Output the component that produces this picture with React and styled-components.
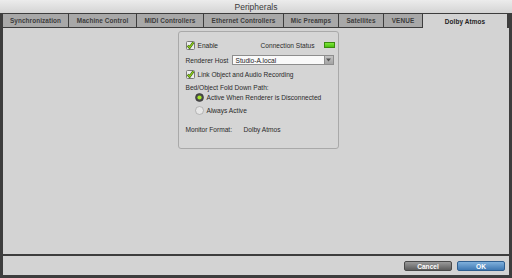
import styled, { createGlobalStyle } from "styled-components";

const GlobalStyle = createGlobalStyle`
  html, body {
    margin: 0;
    padding: 0;
    background: #3d3d3d;
  }
  * { box-sizing: border-box; }
`;

const Window = styled.div`
  width: 512px;
  height: 278px;
  background: #3d3d3d;
  display: flex;
  flex-direction: column;
  font-family: "Liberation Sans", Arial, sans-serif;
  color: #2a2a2a;
  overflow: hidden;
`;

const TitleBar = styled.div`
  height: 13px;
  background: linear-gradient(#ececec, #d4d4d4);
  display: flex;
  align-items: center;
  justify-content: center;
  font-size: 8.5px;
  color: #3a3a3a;
`;

const TabStrip = styled.div`
  display: flex;
  gap: 1px;
  margin: 1px 5px 0 3px;
  height: 14px;
`;

const Tab = styled.div`
  width: ${(p) => p.$w}px;
  flex: none;
  display: flex;
  align-items: center;
  justify-content: center;
  font-size: 6.4px;
  font-weight: bold;
  letter-spacing: 0.1px;
  color: ${(p) => (p.$active ? "#222" : "#3c3c3c")};
  background: ${(p) => (p.$active ? "#d3d3d3" : "#a8a8a8")};
  height: ${(p) => (p.$active ? "14px" : "13px")};
`;

const Content = styled.div`
  height: 226px;
  margin: 0 3px;
  background: #d3d3d3;
  display: flex;
  justify-content: center;
  padding-top: 3px;
`;

const Panel = styled.div`
  width: 161px;
  height: 118px;
  margin-left: 4px;
  border: 1px solid #a9a9a9;
  border-radius: 3px;
  background: #d5d5d5;
  padding: 8px 3px 0 7px;
  display: flex;
  flex-direction: column;
  font-size: 6.6px;
`;

const Row = styled.div`
  height: 10px;
  margin-top: ${(p) => p.$mt || 0}px;
  padding-left: ${(p) => p.$indent || 0}px;
  display: flex;
  align-items: center;
  gap: 3px;
  white-space: nowrap;
`;

const Spacer = styled.div`
  flex: 1;
`;

const Led = styled.div`
  width: 11px;
  height: 6px;
  background: linear-gradient(#7ee83a, #4cc012);
  border: 1px solid #3b8a10;
  margin-left: 6px;
`;

const Label = styled.span`
  width: ${(p) => (p.$w ? `${p.$w}px` : "auto")};
  flex: none;
`;

const Input = styled.div`
  width: 93px;
  height: 10px;
  background: #fafafa;
  border: 1px solid #8e8e8e;
  padding-left: 3px;
  display: flex;
  align-items: center;
  font-size: 6.6px;
  color: #222;
`;

const DropButton = styled.div`
  width: 9px;
  height: 10px;
  margin-left: -3px;
  background: linear-gradient(#c4c4c4, #a4a4a4);
  border: 1px solid #8e8e8e;
  border-left: none;
  display: flex;
  align-items: center;
  justify-content: center;
`;

const Footer = styled.div`
  height: 19px;
  margin: 2px 3px 0 3px;
  background: #d3d3d3;
  display: flex;
  justify-content: flex-end;
  align-items: center;
  gap: 5px;
  padding: 1px 4px 0 0;
`;

const Button = styled.div`
  width: 48px;
  height: 10px;
  border-radius: 2px;
  display: flex;
  align-items: center;
  justify-content: center;
  font-size: 6.6px;
  font-weight: bold;
  color: #fff;
  background: ${(p) =>
    p.$primary
      ? "linear-gradient(#7fb0dc, #3f78b2)"
      : "linear-gradient(#9a9a9a, #5c5c5c)"};
  border: 1px solid ${(p) => (p.$primary ? "#2f5f90" : "#4a4a4a")};
`;

const Checkbox = () => (
  <svg width="9" height="9" viewBox="0 0 9 9">
    <rect x="0.5" y="0.5" width="8" height="8" rx="1" fill="#ececec" stroke="#7a7a7a" />
    <path d="M1.8 4.6 L3.6 6.6 L7.4 1.4" fill="none" stroke="#2e4a0a" strokeWidth="2.4" />
    <path d="M1.8 4.6 L3.6 6.6 L7.4 1.4" fill="none" stroke="#8ed21c" strokeWidth="1.3" />
  </svg>
);

const Radio = ({ on }) => (
  <svg width="9" height="9" viewBox="0 0 9 9">
    {on ? (
      <>
        <circle cx="4.5" cy="4.5" r="4" fill="#4a4a4a" stroke="#333" strokeWidth="0.6" />
        <circle cx="4.5" cy="4.5" r="2.1" fill="#a6e62a" />
      </>
    ) : (
      <circle cx="4.5" cy="4.5" r="4" fill="#e6e6e6" stroke="#a0a0a0" strokeWidth="0.7" />
    )}
  </svg>
);

const tabs = [
  ["Synchronization", 65],
  ["Machine Control", 67],
  ["MIDI Controllers", 66],
  ["Ethernet Controllers", 79],
  ["Mic Preamps", 54],
  ["Satellites", 44],
  ["VENUE", 38],
  ["Dolby Atmos", 84],
];

export default function App() {
  return (
    <>
      <GlobalStyle />
      <Window>
        <TitleBar>Peripherals</TitleBar>
        <TabStrip>
          {tabs.map(([name, w], i) => (
            <Tab key={name} $w={w} $active={i === tabs.length - 1}>
              {name}
            </Tab>
          ))}
        </TabStrip>
        <Content>
          <Panel>
            <Row>
              <Checkbox />
              <span>Enable</span>
              <Spacer />
              <span>Connection Status</span>
              <Led />
            </Row>
            <Row $mt={5}>
              <Label $w={43}>Renderer Host</Label>
              <Input>Studio-A.local</Input>
              <DropButton>
                <svg width="5" height="4" viewBox="0 0 5 4">
                  <path d="M0 0.5 H5 L2.5 3.5 Z" fill="#555" />
                </svg>
              </DropButton>
            </Row>
            <Row $mt={4}>
              <Checkbox />
              <span>Link Object and Audio Recording</span>
            </Row>
            <Row $mt={3}>Bed/Object Fold Down Path:</Row>
            <Row $indent={9}>
              <Radio on />
              <span>Active When Renderer is Disconnected</span>
            </Row>
            <Row $mt={3} $indent={9}>
              <Radio />
              <span>Always Active</span>
            </Row>
            <Row $mt={9}>
              <Label $w={55}>Monitor Format:</Label>
              <span>Dolby Atmos</span>
            </Row>
          </Panel>
        </Content>
        <Footer>
          <Button>Cancel</Button>
          <Button $primary>OK</Button>
        </Footer>
      </Window>
    </>
  );
}
